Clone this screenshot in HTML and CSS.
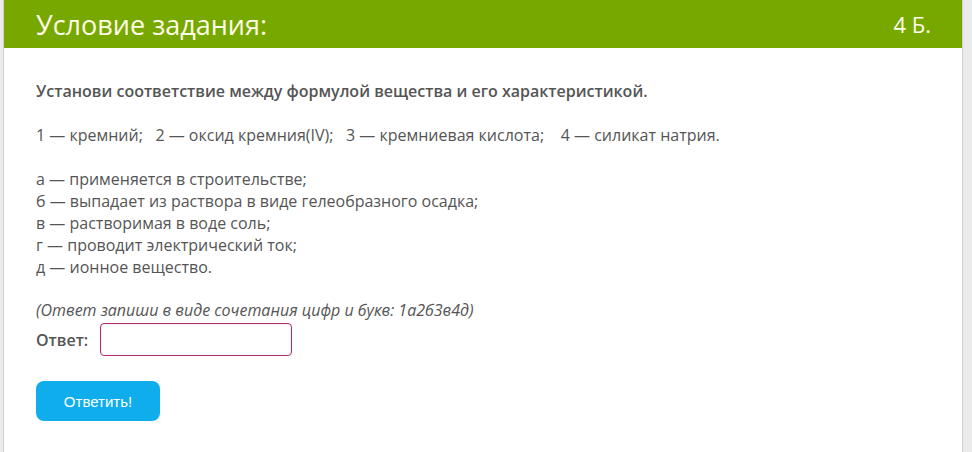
FILE: index.html
```html
<!DOCTYPE html>
<html lang="ru">
<head>
<meta charset="utf-8">
<link rel="stylesheet" href="styles.css">
</head>
<body>
<div class="page">
  <div class="card">
    <div class="head">
      <div class="title">Условие задания:</div>
      <div class="points">4 Б.</div>
    </div>
    <div class="body">
      <p class="task">Установи соответствие между формулой вещества и его характеристикой.</p>
      <p class="line">1 — кремний;&nbsp;&nbsp; 2 — оксид кремния(IV);&nbsp;&nbsp; 3 — кремниевая кислота;&nbsp;&nbsp;&nbsp; 4 — силикат натрия.</p>
      <p class="list">а — применяется в строительстве;<br>б — выпадает из раствора в виде гелеобразного осадка;<br>в — растворимая в воде соль;<br>г — проводит электрический ток;<br>д — ионное вещество.</p>
      <p class="hint">(Ответ запиши в виде сочетания цифр и букв: 1а2б3в4д)</p>
      <div class="answer">
        <span class="label">Ответ:</span>
        <input class="field" type="text">
      </div>
      <button class="submit">Ответить!</button>
    </div>
  </div>
</div>
</body>
</html>
```

FILE: styles.css
```css
html, body { margin: 0; padding: 0; }
body {
  background: #ebebeb;
  font-family: "Open Sans", "Liberation Sans", sans-serif;
  color: #555;
}
.page {
  display: flex;
  height: 452px;
  padding-left: 3px;
}
.card {
  width: 958px;
  background: #fff;
  border-left: 1px solid #d0d0d0;
  border-right: 1px solid #d0d0d0;
}
.head {
  height: 48px;
  background: #77a800;
  display: flex;
  align-items: center;
  justify-content: space-between;
  padding: 0 31px 0 32px;
  color: #fdfde8;
}
.title { font-size: 27px; }
.points { font-size: 22px; }
.body { padding: 32px 32px 0 32px; }
.task { margin: 0; font-size: 16px; font-weight: 600; line-height: 22px; }
.line { margin: 22px 0 0; font-size: 16px; line-height: 22px; }
.list { margin: 22px 0 0; font-size: 16px; line-height: 22px; }
.hint { margin: 21px 0 0; font-size: 16px; line-height: 22px; font-style: italic; }
.answer { display: flex; align-items: center; gap: 12px; margin-top: 2px; }
.label { font-size: 16px; font-weight: 600; }
.field {
  width: 192px;
  height: 33px;
  box-sizing: border-box;
  border: 1px solid #b02c72;
  border-radius: 4px;
  margin: 0;
  padding: 0 6px;
  box-shadow: inset 0 1px 3px rgba(0,0,0,0.08);
}
.submit {
  margin-top: 25px;
  width: 124px;
  height: 40px;
  border: 0;
  border-radius: 8px;
  background: #0fadeb;
  color: #fff;
  font-family: "Liberation Sans", sans-serif;
  font-size: 15px;
  padding: 0;
}
```
